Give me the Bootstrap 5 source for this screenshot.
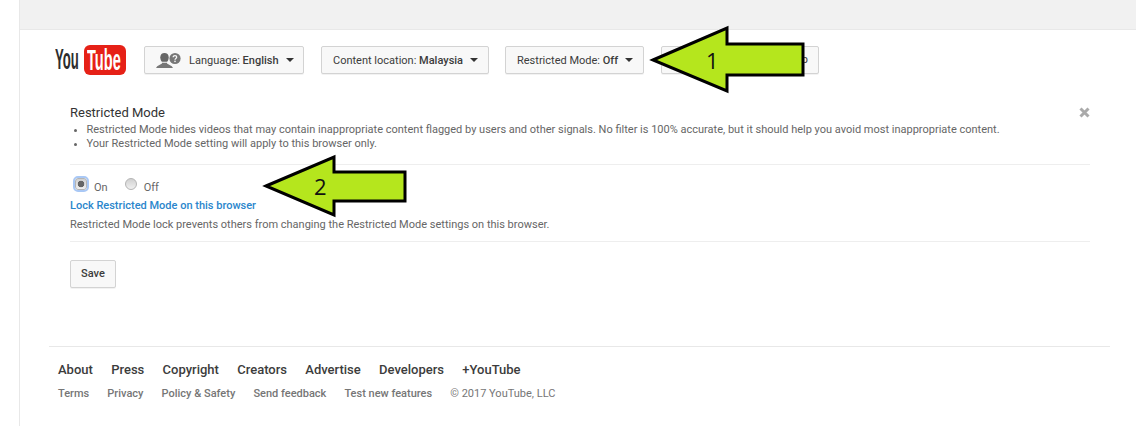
<!doctype html>
<html lang="en">

<head>
    <meta charset="utf-8">
    <meta name="viewport" content="width=device-width, initial-scale=1">
    <title>Restricted Mode</title>
    <link href="https://cdn.jsdelivr.net/npm/bootstrap@5.3.1/dist/css/bootstrap.min.css" rel="stylesheet">
    <style>
        html, body { height: 100%; overflow: hidden; }
        body { font-family: Roboto, "Liberation Sans", sans-serif; font-size: 11px; color: #666; background: #fff; position: relative; }
        .page-wrap { margin-left: 19px; border-left: 1px solid #e8e8e8; height: 100%; }
        .top-band { height: 30px; background: #f1f1f1; border-bottom: 1px solid #e8e8e8; }
        .pick-row { padding: 16px 0 0 35px; height: 73px; }
        .yt-logo { width: 71px; height: 30px; margin: -1px 18px 0 0; font-family: "Liberation Sans", sans-serif; font-weight: 700; line-height: 30px; }
        .yt-you { display: block; width: 25px; white-space: nowrap; font-size: 16px; color: #2d2d2d; transform: scale(.82, 1.8); transform-origin: 0 50%; }
        .yt-box { width: 42px; height: 30px; margin-left: 4px; background: #e62117; border-radius: 6px; color: #fff; overflow: hidden; }
        .yt-tube { display: block; white-space: nowrap; padding-left: 3px; font-size: 18px; transform: scale(.81, 1.6); transform-origin: 3px 50%; }
        .pick-btn { height: 28px; padding: 0 10px 0 11px; font-size: 11px; line-height: 26px; color: #3c3c3c; white-space: nowrap; background: #f8f8f8; border: 1px solid #d3d3d3; border-radius: 2px; box-shadow: 0 1px 0 rgba(0,0,0,.05); display: flex; align-items: center; }
        .pick-btn b { font-weight: 500; }
        .pick-text { margin-top: 2px; }
        .pick-caret { width: 0; height: 0; border-left: 4px solid transparent; border-right: 4px solid transparent; border-top: 4px solid #333; margin-left: 7px; }
        .lang-btn { width: 160px; margin-right: 17px; }
        .loc-btn { width: 168px; margin-right: 16px; }
        .mode-btn { width: 139px; margin-right: 17px; }
        .help-btn { width: 158px; justify-content: flex-end; }
        .notice { margin: 0 46px 0 50px; position: relative; }
        .notice-title { font-size: 13px; line-height: 17px; color: #333; font-weight: 400; margin: 0; padding-top: 1px; }
        .notice-list { margin: 0; padding: 2px 0 0 16.5px; line-height: 14px; }
        .notice-close { position: absolute; right: 0; top: 4px; width: 11px; height: 11px; }
        .notice-line { border-top: 1px solid #eee; }
        .line-one { margin-top: 13px; }
        .radio-row { padding-top: 13px; height: 31px; line-height: 14px; }
        .radio-box { appearance: none; display: block; flex-shrink: 0; width: 12px; height: 12px; border-radius: 50%; border: 1px solid #b4b4b4; background: linear-gradient(#d0d0d0, #f0f0f0); margin: 0; }
        .radio-on { background: radial-gradient(circle, #666 0 3px, transparent 3.6px), linear-gradient(#d0d0d0, #f0f0f0); outline: 2px solid #a9c8f5; outline-offset: 0; border-radius: 3px; margin-left: 5px; }
        .radio-off { margin-left: 17px; }
        .radio-label { margin-left: 7px; padding-top: 3px; }
        .lock-link { color: #2b86cc; font-weight: 500; text-decoration: none; line-height: 15px; display: block; padding-top: 2px; }
        .lock-note { line-height: 15px; padding-top: 4px; padding-bottom: 9px; margin: 0; }
        .save-btn { margin-top: 18px; width: 46px; height: 28px; padding: 0; font-size: 11px; color: #3c3c3c; font-weight: 500; background: #f8f8f8; border: 1px solid #d3d3d3; border-radius: 2px; box-shadow: 0 1px 0 rgba(0,0,0,.05); }
        .foot-area { margin: 58px 26px 0 29px; border-top: 1px solid #e8e8e8; padding: 14px 0 0 9px; }
        .foot-main { gap: 18.3px; font-size: 13px; font-weight: 500; line-height: 17px; }
        .foot-main a { color: #3c3c3c; text-decoration: none; }
        .foot-sub { gap: 18.1px; margin-top: 8px; line-height: 15px; font-weight: 500; color: #767676; }
        .foot-sub a { color: #767676; text-decoration: none; }
        .foot-copy { font-weight: 400; }
        .arrow-layer { position: absolute; left: 0; top: 0; width: 1136px; height: 426px; pointer-events: none; }
        .arrow-num { font-family: "Open Sans", "Noto Sans", sans-serif; font-size: 22px; fill: #111; }
    </style>
</head>

<body>
    <div class="page-wrap">
        <div class="top-band"></div>

        <div class="pick-row d-flex align-items-start">
            <div class="yt-logo d-flex">
                <span class="yt-you">You</span>
                <div class="yt-box"><span class="yt-tube">Tube</span></div>
            </div>
            <button class="pick-btn lang-btn" type="button">
                <svg width="25" height="17" viewBox="0 0 25 17" class="me-2 flex-shrink-0">
                    <path d="M8.500 1C6 1 4.300 2.500 4.300 5.300c0 2 .6 3.500 1.600 4.500h5.200c1-1 1.600-2.500 1.600-4.500C12.700 2.500 11 1 8.500 1z" fill="#666"></path>
                    <path d="M6 10.800v.8L1.200 14.200 0 16h17l-1.200-1.800L11 11.600v-.8z" fill="#777"></path>
                    <circle cx="19" cy="6.500" r="5.600" fill="#777"></circle>
                    <path d="M17.200 5.200c0-1 .8-1.600 1.800-1.600s1.700.6 1.700 1.500c0 1.400-1.700 1.300-1.700 2.700" fill="none" stroke="#f8f8f8" stroke-width="1.300"></path>
                    <circle cx="19" cy="9.400" r=".8" fill="#f8f8f8"></circle>
                </svg>
                <span class="pick-text">Language: <b>English</b></span><span class="pick-caret"></span>
            </button>
            <button class="pick-btn loc-btn" type="button"><span class="pick-text">Content location: <b>Malaysia</b></span><span class="pick-caret"></span></button>
            <button class="pick-btn mode-btn" type="button"><span class="pick-text">Restricted Mode: <b>Off</b></span><span class="pick-caret"></span></button>
            <button class="pick-btn help-btn" type="button">Help</button>
        </div>

        <div class="notice">
            <h1 class="notice-title">Restricted Mode</h1>
            <svg class="notice-close" viewBox="0 0 11 11"><path d="M1.500 1.500l8 8M9.500 1.500l-8 8" stroke="#aaa" stroke-width="3"></path></svg>
            <ul class="notice-list">
                <li>Restricted Mode hides videos that may contain inappropriate content flagged by users and other signals. No filter is 100% accurate, but it should help you avoid most inappropriate content.</li>
                <li>Your Restricted Mode setting will apply to this browser only.</li>
            </ul>
            <div class="notice-line line-one"></div>
            <div class="radio-row d-flex align-items-start">
                <input class="radio-box radio-on" type="radio" name="mode" checked>
                <span class="radio-label">On</span>
                <input class="radio-box radio-off" type="radio" name="mode">
                <span class="radio-label">Off</span>
            </div>
            <a class="lock-link" href="#">Lock Restricted Mode on this browser</a>
            <p class="lock-note">Restricted Mode lock prevents others from changing the Restricted Mode settings on this browser.</p>
            <div class="notice-line"></div>
            <button class="save-btn d-block" type="button">Save</button>
        </div>

        <div class="foot-area">
            <div class="foot-main d-flex">
                <a href="#">About</a><a href="#">Press</a><a href="#">Copyright</a><a href="#">Creators</a><a href="#">Advertise</a><a href="#">Developers</a><a href="#">+YouTube</a>
            </div>
            <div class="foot-sub d-flex">
                <a href="#">Terms</a><a href="#">Privacy</a><a href="#">Policy &amp; Safety</a><a href="#">Send feedback</a><a href="#">Test new features</a><span class="foot-copy">&copy; 2017 YouTube, LLC</span>
            </div>
        </div>
    </div>

    <!-- the two callout arrows sit on top of the page -->
    <svg class="arrow-layer" viewBox="0 0 1136 426">
        <polygon points="653,60 727,28 727,44 803,44 803,75 727,75 727,91" fill="#b5e61d" stroke="#000" stroke-width="3"></polygon>
        <text class="arrow-num" x="706" y="69">1</text>
        <polygon points="266,186 334,157 334,172 405,172 405,201 334,201 334,215" fill="#b5e61d" stroke="#000" stroke-width="3"></polygon>
        <text class="arrow-num" x="314" y="195">2</text>
    </svg>
    <script src="https://cdn.jsdelivr.net/npm/bootstrap@5.3.1/dist/js/bootstrap.bundle.min.js"></script>
</body>

</html>
